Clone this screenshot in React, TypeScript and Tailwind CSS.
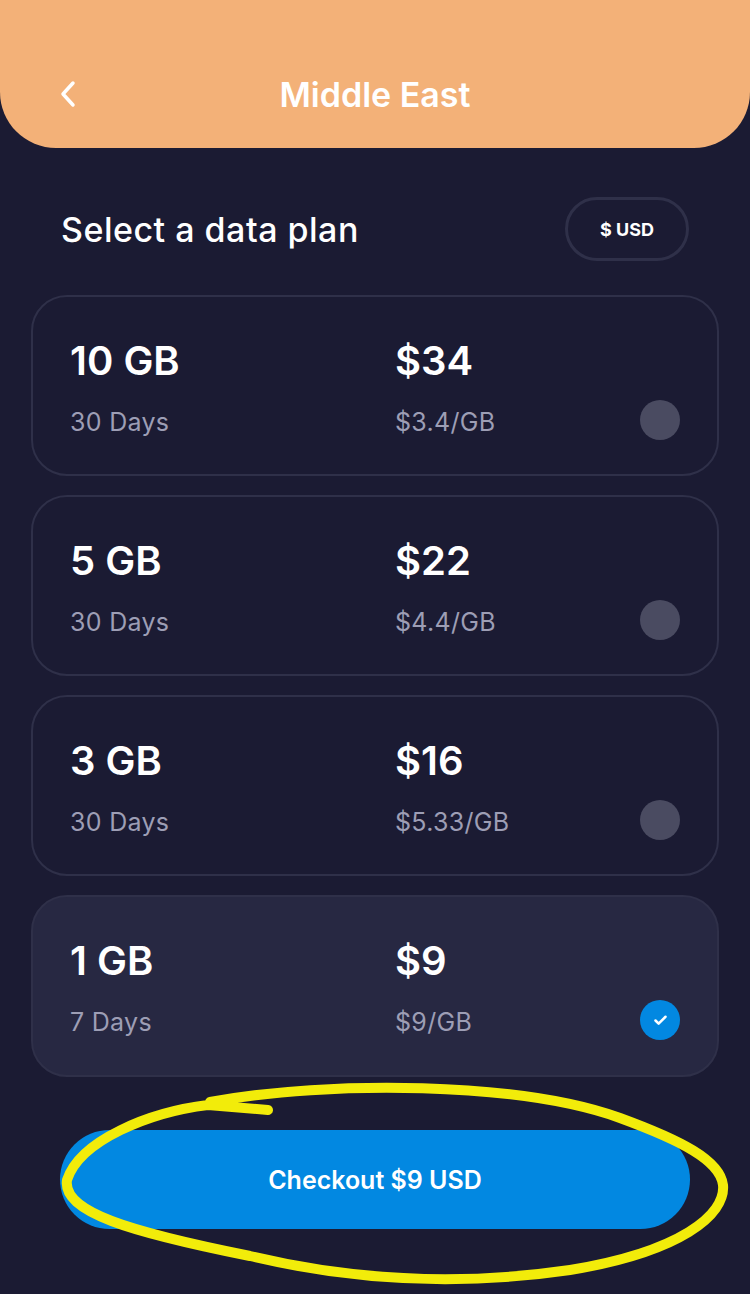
import { Check } from "lucide-react"

type Plan = {
  data: string
  days: string
  price: string
  perGb: string
}

const plans: Plan[] = [
  { data: "10 GB", days: "30 Days", price: "$34", perGb: "$3.4/GB" },
  { data: "5 GB", days: "30 Days", price: "$22", perGb: "$4.4/GB" },
  { data: "3 GB", days: "30 Days", price: "$16", perGb: "$5.33/GB" },
  { data: "1 GB", days: "7 Days", price: "$9", perGb: "$9/GB" },
]

const selected = 3

const PlanCard = ({ plan, active }: { plan: Plan; active: boolean }) => {
  return (
    <div
      className={
        active
          ? "h-[182px] rounded-[36px] border-2 border-[#2f3049] bg-[#272842] pl-[37px] pr-[37px] pt-[40px] flex items-start"
          : "h-[181px] rounded-[36px] border-2 border-[#2f3049] pl-[37px] pr-[37px] pt-[40px] flex items-start"
      }
    >
      <div className="w-[325px] flex flex-col">
        <span className="text-[40px] leading-[48px] font-semibold text-white">{plan.data}</span>
        <span className="text-[25px] leading-[30px] tracking-[0.3px] text-[#9d9eb5] mt-[22px]">{plan.days}</span>
      </div>
      <div className="flex-1 flex flex-col">
        <span className="text-[40px] leading-[48px] font-semibold text-white">{plan.price}</span>
        <span className="text-[25px] leading-[30px] tracking-[0.3px] text-[#9d9eb5] mt-[22px]">{plan.perGb}</span>
      </div>
      <div className="self-start mt-[63px]">
        {active ? (
          <div className="w-10 h-10 rounded-full bg-[#0288e1] flex items-center justify-center">
            <Check size={15} strokeWidth={4} className="text-white" />
          </div>
        ) : (
          <div className="w-10 h-10 rounded-full bg-[#4a4b61]" />
        )}
      </div>
    </div>
  )
}

const App = () => {
  return (
    <div className="relative w-[750px] min-h-[1294px] bg-[#1b1b33] font-['Inter',sans-serif]">
      <div className="h-[148px] bg-[#f3b178] rounded-b-[56px] grid grid-cols-[1fr_auto_1fr] items-center pt-[40px] px-[58px]">
        <svg width="22" height="30" viewBox="0 0 22 30" fill="none">
          <path d="M15 4 L5 15 L15 26" stroke="white" strokeWidth="3.5" strokeLinecap="round" strokeLinejoin="round" />
        </svg>
        <h1 className="text-[34px] font-semibold text-white">Middle East</h1>
        <div />
      </div>

      <div className="flex items-center justify-between pl-[61px] pr-[61px] mt-[49px]">
        <h2 className="text-[34px] tracking-[0.5px] font-medium text-white">Select a data plan</h2>
        <div className="w-[124px] h-[64px] rounded-full border-[3px] border-[#2f3049] flex items-center justify-center text-[18px] font-bold text-white">
          $ USD
        </div>
      </div>

      <div className="flex flex-col gap-[19px] px-[31px] mt-[34px]">
        {plans.map((p, i) => (
          <PlanCard key={p.data} plan={p} active={i === selected} />
        ))}
      </div>

      <div className="px-[60px] mt-[53px]">
        <button className="w-full h-[99px] rounded-full bg-[#0288e1] text-white text-[25px] font-semibold pt-[3px]">
          Checkout $9 USD
        </button>
      </div>

      {/* yellow marker annotation over the checkout button */}
      <svg
        className="absolute left-0 top-[1070px] pointer-events-none"
        width="750"
        height="224"
        viewBox="0 1070 750 224"
        fill="none"
      >
        <path
          d="M268 1110 L208 1105 C150 1112 80 1140 67 1180 C62 1212 130 1232 250 1256 C350 1280 460 1286 570 1270 C680 1252 726 1215 723 1185 C720 1160 680 1140 620 1118 C520 1082 330 1080 210 1102"
          stroke="#f2ec0a"
          strokeWidth="10"
          strokeLinecap="round"
          strokeLinejoin="round"
        />
      </svg>
    </div>
  )
}

export default App
